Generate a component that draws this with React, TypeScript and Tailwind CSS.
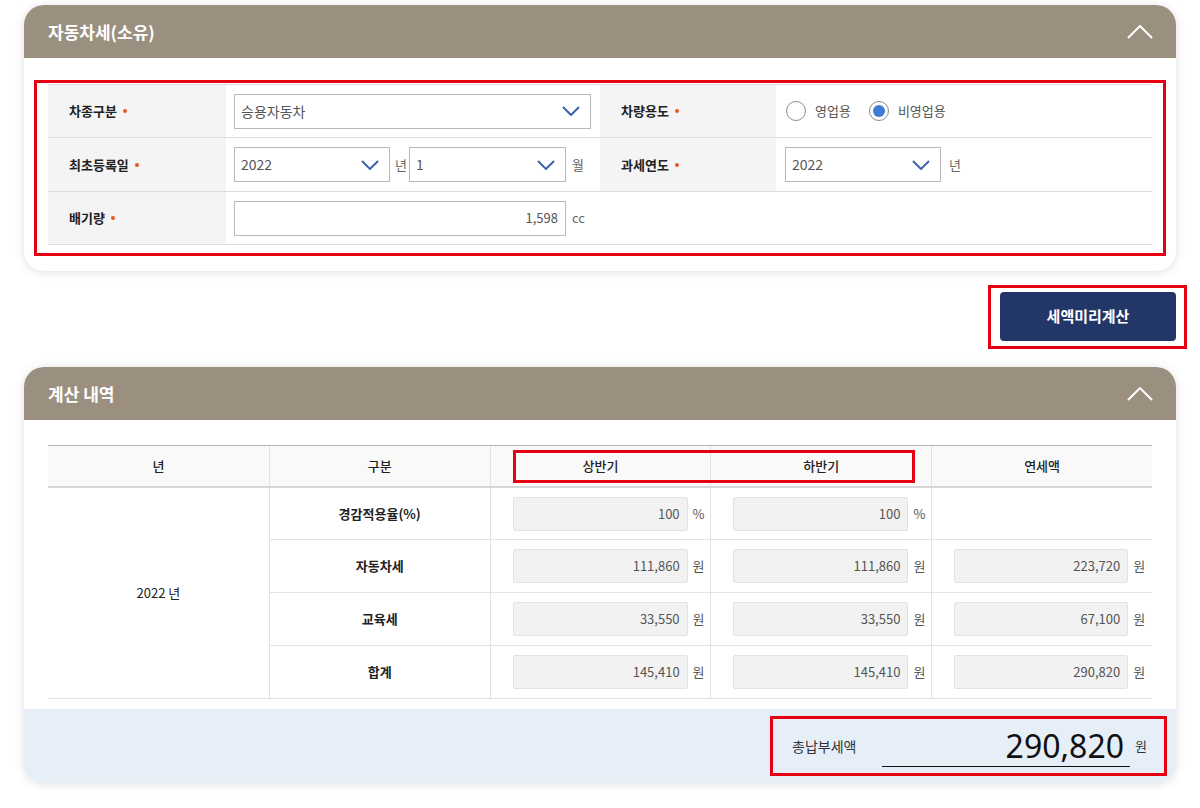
import React from "react";

function ChevronDown() {
  return (
    <svg width="18" height="10" viewBox="0 0 18 10" className="shrink-0">
      <path d="M1 1l8 8 8-8" stroke="#3d63a6" strokeWidth="2" fill="none" />
    </svg>
  );
}

function ChevronUp() {
  return (
    <svg width="26" height="14" viewBox="0 0 26 14">
      <path d="M1 13L13 1l12 12" stroke="#ffffff" strokeWidth="2" fill="none" />
    </svg>
  );
}

function Select({ value, w }: { value: string; w: string }) {
  return (
    <div className={`${w} h-[35px] border border-[#b8b8b8] bg-white flex items-center justify-between pl-[6px] pr-[10px] text-[14px] text-[#555]`}>
      <span>{value}</span>
      <ChevronDown />
    </div>
  );
}

function Label({ text }: { text: string }) {
  return (
    <div className="bg-[#f4f4f4] flex items-center pl-[21px] text-[13px] font-bold text-[#222]">
      {text}
      <span className="ml-[6px] w-[4px] h-[4px] rounded-full bg-[#e8561e]" />
    </div>
  );
}

function Unit({ text }: { text: string }) {
  return <span className="ml-[6px] text-[13px] text-[#666]">{text}</span>;
}

function Radio({ checked, label }: { checked?: boolean; label: string }) {
  return (
    <div className="flex items-center">
      <span className="w-[20px] h-[20px] rounded-full border border-[#8c8c8c] bg-white flex items-center justify-center">
        {checked && <span className="w-[12px] h-[12px] rounded-full bg-[#3f7ad4]" />}
      </span>
      <span className="ml-[9px] text-[13px] text-[#555]">{label}</span>
    </div>
  );
}

function PanelHeader({ title }: { title: string }) {
  return (
    <div className="h-[53px] bg-[#9b907f] flex items-center justify-between pl-6 pr-[23px]">
      <h2 className="text-[17px] font-bold text-white">{title}</h2>
      <ChevronUp />
    </div>
  );
}

function ReadBox({ value, unit, w = "w-[175px]" }: { value: string; unit: string; w?: string }) {
  return (
    <div className="flex items-center pl-[22px]">
      <div className={`${w} h-[34px] bg-[#f2f2f2] border border-[#e2e2e2] rounded-[2px] flex items-center justify-end pr-[7px] text-[13px] text-[#555]`}>
        {value}
      </div>
      <span className="ml-[5px] text-[13px] text-[#555]">{unit}</span>
    </div>
  );
}

export default function App() {
  const rows = [
    { name: "경감적용율(%)", first: "100", second: "100", total: "", unit: "%" },
    { name: "자동차세", first: "111,860", second: "111,860", total: "223,720", unit: "원" },
    { name: "교육세", first: "33,550", second: "33,550", total: "67,100", unit: "원" },
    { name: "합계", first: "145,410", second: "145,410", total: "290,820", unit: "원" },
  ];

  return (
    <div className="min-h-[808px] bg-white px-6 pt-[5px] font-['Noto_Sans_CJK_KR','Noto_Sans',sans-serif]">
      {/* 자동차세 입력 */}
      <section className="rounded-[20px] bg-white overflow-hidden shadow-[0_1px_10px_rgba(0,0,0,0.13)]">
        <PanelHeader title="자동차세(소유)" />
        <div className="pt-[22px] pb-[15px] px-[10px]">
          <div className="border-[3px] border-[#e60012] pt-[1px] pb-[8px] px-[11px]">
            <div className="border-t border-[#dcdcdc]">
              <div className="grid grid-cols-[178px_374px_176px_376px] h-[53px] border-b border-[#dcdcdc]">
                <Label text="차종구분" />
                <div className="flex items-center pl-[8px]">
                  <Select value="승용자동차" w="w-[357px]" />
                </div>
                <Label text="차량용도" />
                <div className="flex items-center pl-[10px] gap-[18px]">
                  <Radio label="영업용" />
                  <Radio checked label="비영업용" />
                </div>
              </div>
              <div className="grid grid-cols-[178px_374px_176px_376px] h-[54px] border-b border-[#dcdcdc]">
                <Label text="최초등록일" />
                <div className="flex items-center pl-[8px]">
                  <Select value="2022" w="w-[156px]" />
                  <span className="ml-[5px] mr-[2px] text-[13px] text-[#666]">년</span>
                  <Select value="1" w="w-[157px]" />
                  <Unit text="월" />
                </div>
                <Label text="과세연도" />
                <div className="flex items-center pl-[9px]">
                  <Select value="2022" w="w-[156px]" />
                  <span className="ml-[8px] text-[13px] text-[#666]">년</span>
                </div>
              </div>
              <div className="grid grid-cols-[178px_1fr] h-[53px] border-b border-[#dcdcdc]">
                <Label text="배기량" />
                <div className="flex items-center pl-[8px]">
                  <div className="w-[332px] h-[35px] border border-[#b8b8b8] bg-white flex items-center justify-end pr-[7px] text-[13px] text-[#555]">
                    1,598
                  </div>
                  <Unit text="cc" />
                </div>
              </div>
            </div>
          </div>
        </div>
      </section>

      {/* 버튼 */}
      <div className="flex justify-end mt-[14px] -mr-[11px]">
        <div className="border-[3px] border-[#e60012] pt-[4px] pb-[5px] pl-[9px] pr-[8px]">
          <button className="w-[176px] h-[49px] rounded-[4px] bg-[#233668] text-white text-[15px] font-bold">
            세액미리계산
          </button>
        </div>
      </div>

      {/* 계산 내역 */}
      <section className="mt-[18px] rounded-[20px] bg-white overflow-hidden shadow-[0_1px_10px_rgba(0,0,0,0.13)]">
        <PanelHeader title="계산 내역" />
        <div className="pt-[25px] px-6">
          <div className="relative">
            <div className="grid grid-cols-5 h-[43px] border-t border-[#b4b4b4] border-b-2 border-b-[#d6d6d6] bg-[#f9f9f9] text-[13px] font-medium text-[#222]">
              <div className="flex items-center justify-center">년</div>
              <div className="flex items-center justify-center border-l border-[#e2e2e2]">구분</div>
              <div className="flex items-center justify-center border-l border-[#e2e2e2]">상반기</div>
              <div className="flex items-center justify-center border-l border-[#e2e2e2]">하반기</div>
              <div className="flex items-center justify-center border-l border-[#e2e2e2]">연세액</div>
            </div>
            <div className="absolute left-[465px] top-[5px] w-[402px] h-[33px] border-[3px] border-[#e60012]" />
            <div className="grid grid-cols-5 grid-rows-[52px_53px_53px_52px] border-b border-[#e2e2e2]">
              <div className="row-span-4 flex items-center justify-center text-[13px] text-[#222]">2022 년</div>
              {rows.map((r, i) => (
                <React.Fragment key={r.name}>
                  <div className={`flex items-center justify-center border-l border-[#e2e2e2] text-[13px] font-bold text-[#222] ${i < 3 ? "border-b" : ""}`}>
                    {r.name}
                  </div>
                  <div className={`flex border-l border-[#e2e2e2] ${i < 3 ? "border-b" : ""}`}>
                    <ReadBox value={r.first} unit={r.unit} />
                  </div>
                  <div className={`flex border-l border-[#e2e2e2] ${i < 3 ? "border-b" : ""}`}>
                    <ReadBox value={r.second} unit={r.unit} />
                  </div>
                  <div className={`flex border-l border-[#e2e2e2] ${i < 3 ? "border-b" : ""}`}>
                    {r.total && <ReadBox value={r.total} unit={r.unit} w="w-[174px]" />}
                  </div>
                </React.Fragment>
              ))}
            </div>
          </div>
        </div>
        <div className="mt-[10px] h-[74px] bg-[#e6eff8] flex items-center justify-end pr-[9px]">
          <div className="w-[397px] h-[60px] border-[3px] border-[#e60012] flex items-center pl-[19px]">
            <span className="text-[14px] text-[#333] w-[90px]">총납부세액</span>
            <div className="w-[248px] h-[42px] border-b border-[#111] flex items-end justify-end pr-[6px] font-['Noto_Sans','Noto_Sans_CJK_KR',sans-serif] text-[32px] leading-[40px] text-[#111]">
              290,820
            </div>
            <span className="ml-[5px] text-[13px] text-[#333]">원</span>
          </div>
        </div>
      </section>
    </div>
  );
}
